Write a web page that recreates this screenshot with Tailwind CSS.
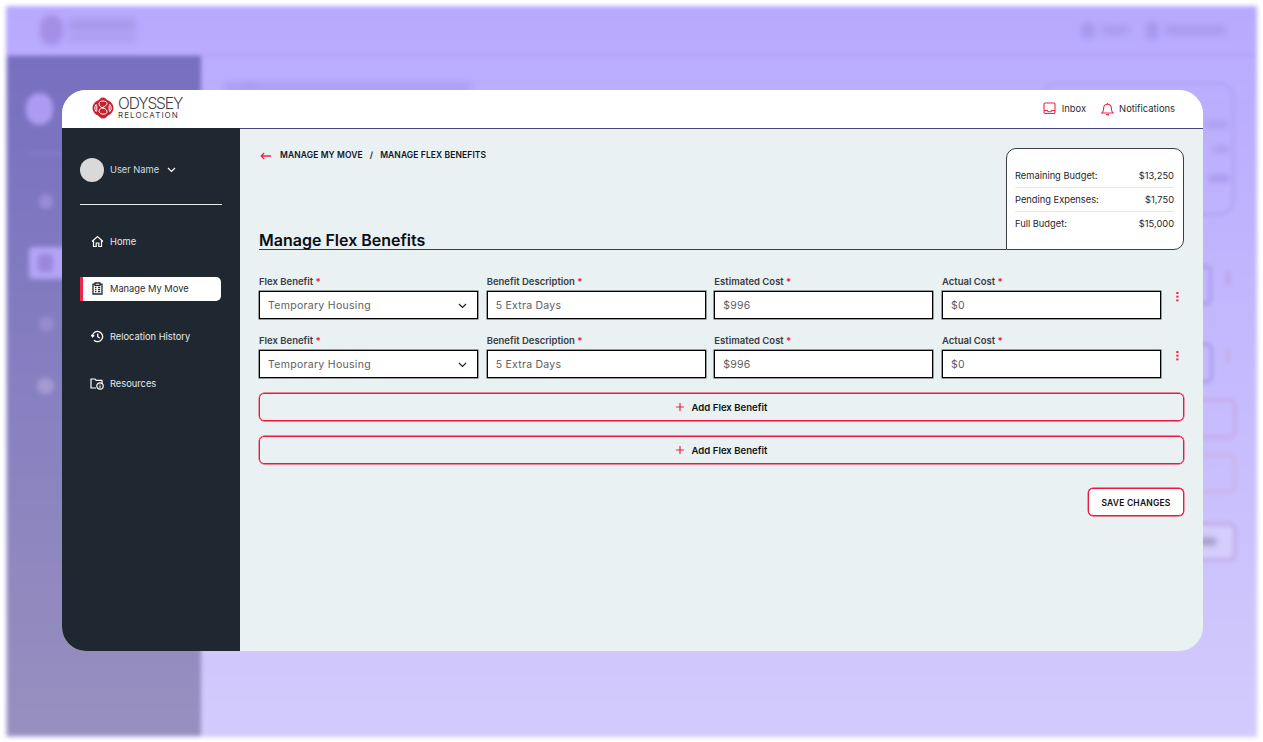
<!DOCTYPE html>
<html>
<head>
<meta charset="utf-8">
<script src="https://cdn.jsdelivr.net/npm/@tailwindcss/browser@4"></script>
</head>
<body class="bg-white font-['Inter',sans-serif] overflow-hidden">
<div class="relative w-[1263px] h-[742px] overflow-hidden bg-white">
  <!-- blurred page behind the dialog -->
  <div class="absolute left-[6px] top-[6px] w-[1251px] h-[731px] bg-gradient-to-b from-[#b8a9ff] to-[#d3cbfc] blur-[2px] overflow-hidden">
    <div class="h-[50px] border-b-2 border-[#afa1f6] relative">
      <div class="absolute left-[34px] top-[9px] w-[23px] h-[30px] rounded-full bg-[#a38fe6] blur-[2px]"></div>
      <div class="absolute left-[62px] top-[13px] w-[68px] h-[12px] bg-[#a899ea] blur-[3px]"></div>
      <div class="absolute left-[62px] top-[29px] w-[68px] h-[6px] bg-[#a899ea] blur-[3px]"></div>
      <div class="absolute left-[1075px] top-[16px] w-[14px] h-[17px] rounded-full bg-[#a698ec] blur-[2px]"></div>
      <div class="absolute left-[1096px] top-[20px] w-[26px] h-[8px] bg-[#a698ec] blur-[3px]"></div>
      <div class="absolute left-[1140px] top-[15px] w-[12px] h-[19px] rounded-full bg-[#a698ec] blur-[2px]"></div>
      <div class="absolute left-[1159px] top-[20px] w-[60px] h-[8px] bg-[#a698ec] blur-[3px]"></div>
    </div>
    <div class="absolute left-[1px] top-[50px] w-[194px] h-[680px] bg-gradient-to-b from-[#786fc0] to-[#9890bf]">
      <div class="absolute left-[19px] top-[37px] w-[27px] h-[32px] rounded-full bg-[#ad9bf2] blur-[1px]"></div>
      <div class="absolute left-[20px] top-[97px] w-[150px] h-[2px] bg-[#8b80cc] blur-[1px]"></div>
      <div class="absolute left-[32px] top-[138px] w-[14px] h-[15px] rounded-full bg-[#9b8bd8] blur-[1px]"></div>
      <div class="absolute left-[22px] top-[191px] w-[160px] h-[32px] rounded bg-[#b3a4f5] blur-[1px]"></div>
      <div class="absolute left-[31px] top-[198px] w-[15px] h-[18px] rounded bg-[#9a88dc] blur-[1px]"></div>
      <div class="absolute left-[32px] top-[260px] w-[15px] h-[16px] rounded-full bg-[#978ad0] blur-[1px]"></div>
      <div class="absolute left-[30px] top-[322px] w-[17px] h-[16px] rounded-full bg-[#a69ad4] blur-[1px]"></div>
    </div>
    <div class="absolute left-[218px] top-[78px] w-[30px] h-[6px] bg-[#a596e8] blur-[3px]"></div>
    <div class="absolute left-[240px] top-[78px] w-[225px] h-[6px] bg-[#a596e8] blur-[3px]"></div>
    <div class="absolute left-[1035px] top-[76px] w-[194px] h-[134px] rounded-2xl border-[3px] border-[#b2a3f2]"></div>
    <div class="absolute left-[1200px] top-[115px] w-[22px] h-[7px] bg-[#ad9ded] blur-[2px]"></div>
    <div class="absolute left-[1208px] top-[140px] w-[14px] h-[7px] bg-[#ad9ded] blur-[2px]"></div>
    <div class="absolute left-[1203px] top-[169px] w-[20px] h-[7px] bg-[#a898ea] blur-[2px]"></div>
    <div class="absolute left-[1150px] top-[259px] w-[56px] h-[40px] rounded-md border-[3px] border-[#a899ea]"></div>
    <div class="absolute left-[1150px] top-[337px] w-[57px] h-[40px] rounded-md border-[3px] border-[#a899ea]"></div>
    <div class="absolute left-[1220px] top-[265px] w-[4px] h-[14px] bg-[#bba2e6] blur-[1px]"></div>
    <div class="absolute left-[1220px] top-[343px] w-[4px] h-[14px] bg-[#c6aee6] blur-[1px]"></div>
    <div class="absolute left-[1150px] top-[392px] w-[81px] h-[41px] rounded-lg border-[4px] border-[#c5aeec]"></div>
    <div class="absolute left-[1150px] top-[447px] w-[81px] h-[41px] rounded-lg border-[4px] border-[#cab5ec]"></div>
    <div class="absolute left-[1150px] top-[516px] w-[81px] h-[40px] rounded-lg bg-[#d5cdfb] border-[4px] border-[#c2b0ec]"></div>
    <div class="absolute left-[1192px] top-[532px] w-[18px] h-[7px] bg-[#a097c8] blur-[2px]"></div>
  </div>

  <!-- dialog -->
  <div class="absolute left-[62px] top-[90px] w-[1141px] h-[561px] rounded-[24px] overflow-hidden flex flex-col bg-[#e9f1f3]">
    <header class="h-[39px] shrink-0 bg-white border-b border-[#4a4578] flex items-center justify-between pl-[30px] pr-[28px]">
      <div class="flex items-center gap-[4px] h-[24px] mb-[2px]">
        <svg width="22" height="22" viewBox="0 0 22 22">
          <path fill="#c8202f" d="M11 0.5 C13.5 0.5 14.5 2.5 16 3.6 C18.6 4.2 21.5 7.8 21.5 11 C21.5 14.2 18.6 17.8 16 18.4 C14.5 19.5 13.5 21.5 11 21.5 C8.5 21.5 7.5 19.5 6 18.4 C3.4 17.8 0.5 14.2 0.5 11 C0.5 7.8 3.4 4.2 6 3.6 C7.5 2.5 8.5 0.5 11 0.5 Z"/>
          <g fill="none" stroke="#fff" stroke-width="1">
            <path d="M7 6.5 C7 3.2 15 3.2 15 6.5 C15 10 7 10.5 7 14 C7 18 15 18 15 15"/>
            <path d="M15 15 C15 11.5 10.5 11 9.5 11 M12.5 11 C11.5 11 7 10.5 7 6.5"/>
            <path d="M4 7.6 C2.4 9.6 2.4 12.4 4 14.4 C5.2 15 5.2 7 4 7.6 Z M18 7.6 C19.6 9.6 19.6 12.4 18 14.4 C16.8 15 16.8 7 18 7.6 Z"/>
          </g>
        </svg>
        <div class="flex flex-col leading-none text-[#3d3d3f]">
          <span class="text-[15.5px] font-light leading-[13px] tracking-[-1.1px]">ODYSSEY</span>
          <span class="text-[8px] font-normal leading-[8px] tracking-[1.05px] mt-[1px]">RELOCATION</span>
        </div>
      </div>
      <div class="flex items-center text-[9.4px] text-[#2b2b33]">
        <svg width="13" height="13" viewBox="0 0 13 13" fill="none" stroke="#f0254c" stroke-width="1.1" class="mr-[6px]">
          <rect x="1" y="1" width="11" height="10.5" rx="1"/><path d="M1 8.5 H4.4 L5.2 9.8 H7.8 L8.6 8.5 H12"/>
        </svg>
        <span class="mr-[15px]">Inbox</span>
        <svg width="13" height="14" viewBox="0 0 13 14" fill="none" stroke="#f0254c" stroke-width="1.1" class="mr-[5px]">
          <path d="M1 11 H12 C10.8 10 10.4 8.5 10.4 6.5 C10.4 4 8.8 2.2 6.5 2.2 C4.2 2.2 2.6 4 2.6 6.5 C2.6 8.5 2.2 10 1 11 Z"/><path d="M6.5 2 V1 M5 12.6 H8"/>
        </svg>
        <span>Notifications</span>
      </div>
    </header>
    <div class="flex-1 flex min-h-0">
      <aside class="w-[178px] shrink-0 bg-[#1f2830] -mt-px text-[#e6e9ec] text-[9.3px] pl-[18px] pr-[18px] pt-[30px]">
        <div class="flex items-center h-[24px]">
          <div class="w-[24px] h-[24px] rounded-full bg-[#d9d9d9]"></div>
          <span class="ml-[6px] text-[#d8dcdf]">User Name</span>
          <svg width="9" height="6" viewBox="0 0 9 6" fill="none" stroke="#fff" stroke-width="1.2" class="ml-[8px]"><path d="M1 1 L4.5 4.5 L8 1"/></svg>
        </div>
        <div class="h-px bg-[#e8ebed] mt-[22px] w-[142px]"></div>
        <nav class="mt-[24px] flex flex-col gap-[23.6px]">
          <a class="h-[24px] flex items-center pl-[11px] pt-px">
            <svg width="13" height="13" viewBox="0 0 13 13" fill="none" stroke="#fff" stroke-width="1.2" class="mr-[6px]"><path d="M1 6.5 L6.5 1.5 L12 6.5 M2.5 5.5 V11.5 H5.2 V8 H7.8 V11.5 H10.5 V5.5"/></svg>
            <span>Home</span>
          </a>
          <a class="h-[24px] w-[141px] flex items-center pl-[8px] bg-white rounded-r-[5px] border-l-[3px] border-[#f0254c] text-[#2a2f36]">
            <svg width="13" height="13" viewBox="0 0 13 13" fill="none" stroke="#1f2830" stroke-width="1.3" class="mr-[6px]"><path d="M4 2.2 H2 V12 H11 V2.2 H9 M4 1 H9 V3.4 H4 Z M4 5.5 H5.4 M7 5.5 H9.2 M4 7.6 H5.4 M7 7.6 H9.2 M4 9.7 H5.4 M7 9.7 H9.2"/></svg>
            <span>Manage My Move</span>
          </a>
          <a class="h-[24px] flex items-center pl-[11px] pt-px">
            <svg width="13" height="13" viewBox="0 0 13 13" fill="none" stroke="#fff" stroke-width="1.3" class="mr-[6px]"><path d="M1.4 6.5 A5.1 5.1 0 1 1 3 10.2 M0.2 5 L1.5 6.8 L3.2 5.2 M6.7 3.5 V6.7 L8.8 8"/></svg>
            <span>Relocation History</span>
          </a>
          <a class="h-[24px] flex items-center pl-[10px]">
            <svg width="14" height="13" viewBox="0 0 14 13" fill="none" stroke="#fff" stroke-width="1.2" class="mr-[6px]"><path d="M6 11 H1 V2 H5 L6.2 3.4 H12 V6"/><circle cx="10" cy="9" r="3.2"/><path d="M10 8.4 V10.8 M10 6.9 V7.6"/></svg>
            <span>Resources</span>
          </a>
        </nav>
      </aside>
      <main class="flex-1 pl-[19px] pr-[19px] pt-[19px]">
        <div class="flex h-[102px]">
          <div class="flex-1 flex flex-col justify-between border-b border-[#3a3a44]">
            <div class="flex items-center h-[15px] text-[8.5px] font-semibold text-[#12141f] tracking-[0.1px]">
              <svg width="12" height="8" viewBox="0 0 12 8" fill="none" stroke="#f0254c" stroke-width="1.3" class="ml-px mr-[8px]"><path d="M11 4 H1.2 M4.2 1 L1.2 4 L4.2 7"/></svg>
              <span>MANAGE MY MOVE</span>
              <span class="mx-[7px]">/</span>
              <span>MANAGE FLEX BENEFITS</span>
            </div>
            <h1 class="text-[16px] leading-[17px] font-semibold text-[#0c0c12]">Manage Flex Benefits</h1>
          </div>
          <div class="w-[178px] h-[102px] bg-white border border-[#3d3d45] rounded-tl-[10px] rounded-tr-[10px] rounded-br-[10px] pt-[15px] pl-[8px] pr-[9px] text-[9.3px] text-[#26262e]">
            <div class="flex justify-between h-[24px] items-center border-b border-[#e3e6e8]"><span>Remaining Budget:</span><span>$13,250</span></div>
            <div class="flex justify-between h-[24px] items-center border-b border-[#e3e6e8]"><span>Pending Expenses:</span><span>$1,750</span></div>
            <div class="flex justify-between h-[24px] items-center"><span>Full Budget:</span><span>$15,000</span></div>
          </div>
        </div>

        <div class="mt-[25px] flex flex-col gap-[15px]">
          <div class="flex">
            <div class="w-[902px] grid grid-cols-4 gap-x-[8.67px]">
              <div>
                <label class="block h-[16px] pt-px leading-[12px] text-[9.5px] font-semibold text-[#3a3b42]">Flex Benefit <span class="text-[#f0254c] font-bold">*</span></label>
                <div class="h-[28px] pt-px bg-white border border-black shadow-[0_0_0_0.5px_#444] pl-[8px] pr-[10px] flex items-center justify-between text-[10.5px] tracking-[0.3px] text-[#5c5e62]"><span>Temporary Housing</span><svg width="9" height="6" viewBox="0 0 9 6" fill="none" stroke="#222" stroke-width="1.2"><path d="M1 1 L4.5 4.5 L8 1"/></svg></div>
              </div>
              <div>
                <label class="block h-[16px] pt-px leading-[12px] text-[9.5px] font-semibold text-[#3a3b42]">Benefit Description <span class="text-[#f0254c] font-bold">*</span></label>
                <div class="h-[28px] pt-px bg-white border border-black shadow-[0_0_0_0.5px_#444] pl-[8px] flex items-center text-[10.5px] tracking-[0.25px] text-[#5c5e62]">5 Extra Days</div>
              </div>
              <div>
                <label class="block h-[16px] pt-px leading-[12px] text-[9.5px] font-semibold text-[#3a3b42]">Estimated Cost <span class="text-[#f0254c] font-bold">*</span></label>
                <div class="h-[28px] pt-px bg-white border border-black shadow-[0_0_0_0.5px_#444] pl-[8px] flex items-center text-[10.5px] tracking-[0.25px] text-[#5c5e62]">$996</div>
              </div>
              <div>
                <label class="block h-[16px] pt-px leading-[12px] text-[9.5px] font-semibold text-[#3a3b42]">Actual Cost <span class="text-[#f0254c] font-bold">*</span></label>
                <div class="h-[28px] pt-px bg-white border border-black shadow-[0_0_0_0.5px_#444] pl-[8px] flex items-center text-[10.5px] tracking-[0.25px] text-[#5c5e62]">$0</div>
              </div>
            </div>
            <div class="flex-1 flex justify-end pr-[5px] pt-[17px]">
              <svg width="3" height="10" viewBox="0 0 3 10" fill="#f0254c"><rect x="0.3" width="2.2" height="2"/><rect x="0.3" y="3.7" width="2.2" height="2"/><rect x="0.3" y="7.4" width="2.2" height="2"/></svg>
            </div>
          </div>
          <div class="flex">
            <div class="w-[902px] grid grid-cols-4 gap-x-[8.67px]">
              <div>
                <label class="block h-[16px] pt-px leading-[12px] text-[9.5px] font-semibold text-[#3a3b42]">Flex Benefit <span class="text-[#f0254c] font-bold">*</span></label>
                <div class="h-[28px] pt-px bg-white border border-black shadow-[0_0_0_0.5px_#444] pl-[8px] pr-[10px] flex items-center justify-between text-[10.5px] tracking-[0.3px] text-[#5c5e62]"><span>Temporary Housing</span><svg width="9" height="6" viewBox="0 0 9 6" fill="none" stroke="#222" stroke-width="1.2"><path d="M1 1 L4.5 4.5 L8 1"/></svg></div>
              </div>
              <div>
                <label class="block h-[16px] pt-px leading-[12px] text-[9.5px] font-semibold text-[#3a3b42]">Benefit Description <span class="text-[#f0254c] font-bold">*</span></label>
                <div class="h-[28px] pt-px bg-white border border-black shadow-[0_0_0_0.5px_#444] pl-[8px] flex items-center text-[10.5px] tracking-[0.25px] text-[#5c5e62]">5 Extra Days</div>
              </div>
              <div>
                <label class="block h-[16px] pt-px leading-[12px] text-[9.5px] font-semibold text-[#3a3b42]">Estimated Cost <span class="text-[#f0254c] font-bold">*</span></label>
                <div class="h-[28px] pt-px bg-white border border-black shadow-[0_0_0_0.5px_#444] pl-[8px] flex items-center text-[10.5px] tracking-[0.25px] text-[#5c5e62]">$996</div>
              </div>
              <div>
                <label class="block h-[16px] pt-px leading-[12px] text-[9.5px] font-semibold text-[#3a3b42]">Actual Cost <span class="text-[#f0254c] font-bold">*</span></label>
                <div class="h-[28px] pt-px bg-white border border-black shadow-[0_0_0_0.5px_#444] pl-[8px] flex items-center text-[10.5px] tracking-[0.25px] text-[#5c5e62]">$0</div>
              </div>
            </div>
            <div class="flex-1 flex justify-end pr-[5px] pt-[17px]">
              <svg width="3" height="10" viewBox="0 0 3 10" fill="#f0254c"><rect x="0.3" width="2.2" height="2"/><rect x="0.3" y="3.7" width="2.2" height="2"/><rect x="0.3" y="7.4" width="2.2" height="2"/></svg>
            </div>
          </div>
          <button class="h-[28px] pt-[2px] rounded-[5px] border border-[#f0173f] shadow-[0_0_0_0.4px_#f0173f] flex items-center justify-center text-[9.6px] font-semibold text-[#111]">
            <svg width="8" height="8" viewBox="0 0 8 8" stroke="#f0254c" stroke-width="1.2" class="mr-[8px] -mt-[2px]"><path d="M4 0 V8 M0 4 H8"/></svg>Add Flex Benefit
          </button>
          <button class="h-[28px] pt-[2px] rounded-[5px] border border-[#f0173f] shadow-[0_0_0_0.4px_#f0173f] flex items-center justify-center text-[9.6px] font-semibold text-[#111]">
            <svg width="8" height="8" viewBox="0 0 8 8" stroke="#f0254c" stroke-width="1.2" class="mr-[8px] -mt-[2px]"><path d="M4 0 V8 M0 4 H8"/></svg>Add Flex Benefit
          </button>
        </div>
        <div class="flex justify-end mt-[24px]">
          <button class="w-[96px] h-[28px] pt-[2px] bg-white rounded-[5px] border border-[#f0173f] shadow-[0_0_0_0.4px_#f0173f] text-[8.5px] font-semibold text-[#111] tracking-[0.2px]">SAVE CHANGES</button>
        </div>
      </main>
    </div>
  </div>
</div>
</body>
</html>
